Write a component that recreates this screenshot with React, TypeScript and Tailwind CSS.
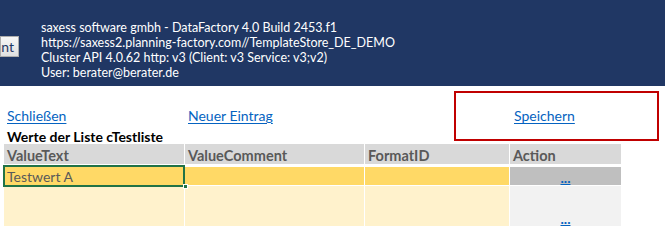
const columns = ["ValueText", "ValueComment", "FormatID", "Action"];

const infoLines = [
  "saxess software gmbh - DataFactory 4.0 Build 2453.f1",
  "https://saxess2.planning-factory.com//TemplateStore_DE_DEMO",
  "Cluster API 4.0.62 http: v3 (Client: v3 Service: v3;v2)",
  "User: berater@berater.de",
];

const link = "text-[14px] leading-[15px] text-[#0563c1] underline underline-offset-2";

export default function App() {
  return (
    <div className="relative h-[251px] w-[665px] overflow-hidden bg-white font-['Lato',sans-serif]">
      <header className="flex h-[86px] bg-[#203764]">
        <div className="pt-[36px]">
          <div className="flex h-[21px] w-[19px] items-center justify-end overflow-hidden border border-[#adadad] bg-gradient-to-b from-[#f7f7f7] to-[#e1e1e1] pr-[4px] text-[14px] text-[#1f3864]">
            nt
          </div>
        </div>
        <div className="ml-[22px] pt-[20px] text-[12.5px] leading-[15px] text-white">
          {infoLines.map((line) => (
            <div key={line} className="whitespace-nowrap">
              {line}
            </div>
          ))}
        </div>
      </header>

      <div className="pl-[4px]">
        <div className="grid grid-cols-[180px_180px_145px_111px] gap-x-[1px]">
          <div className="flex h-[39px] items-end pb-[2px] pl-[3px]">
            <a className={link}>Schließen</a>
          </div>
          <div className="flex h-[39px] items-end pb-[2px] pl-[3px]">
            <a className={link}>Neuer Eintrag</a>
          </div>
          <div />
          <div className="flex h-[39px] items-end pb-[2px] pl-[2px]">
            <a className={link}>Speichern</a>
          </div>
        </div>

        <div className="flex h-[19px] items-end pl-[3px] text-[14px] font-bold leading-[15px] text-black">
          Werte der Liste cTestliste
        </div>

        <div className="grid grid-cols-[180px_179px_144px_111px] gap-x-[1px] gap-y-[1px]">
          {columns.map((c) => (
            <div key={c} className="flex h-[20px] items-end bg-[#d9d9d9] pl-[3px] text-[14.5px] font-bold leading-[17px] text-[#595959]">
              {c}
            </div>
          ))}
          <div className="col-span-4 h-[1px]" />
          <div className="relative flex h-[18px] items-end bg-[#ffd966] pl-[3px] text-[14px] leading-[16px] text-[#595959]">
            Testwert A
            <div className="absolute -left-[1px] -top-[2px] h-[22px] w-[182px] border-2 border-[#217346]" />
            <div className="absolute -right-[4px] bottom-[-4px] h-[5px] w-[5px] border border-white bg-[#217346]" />
          </div>
          <div className="h-[18px] bg-[#ffd966]" />
          <div className="h-[18px] bg-[#ffd966]" />
          <div className="flex h-[18px] items-end justify-center bg-[#bfbfbf] text-[14px] font-bold leading-[15px]">
            <a className="text-[#0563c1] underline">...</a>
          </div>
          <div className="h-[40px] bg-[#fff2cc]" />
          <div className="h-[40px] bg-[#fff2cc]" />
          <div className="h-[40px] bg-[#fff2cc]" />
          <div className="flex h-[40px] items-end justify-center bg-[#f2f2f2] text-[14px] font-bold leading-[15px]">
            <a className="text-[#0563c1] underline">...</a>
          </div>
        </div>
      </div>

      <div className="absolute left-[454px] top-[91px] h-[50px] w-[205px] border-2 border-[#c00000]" />
    </div>
  );
}
